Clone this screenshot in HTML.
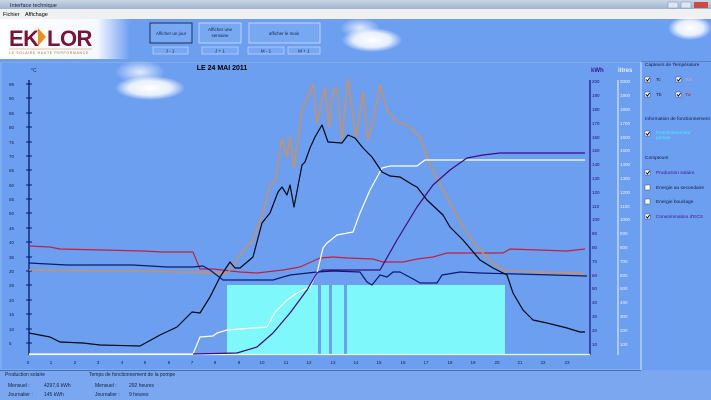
<!DOCTYPE html>
<html><head><meta charset="utf-8"><style>
*{margin:0;padding:0}
body{width:711px;height:400px;overflow:hidden;background:#6d9ff0;font-family:"Liberation Sans",sans-serif;position:relative}
.t{position:absolute;font-size:5px;color:#102040;white-space:nowrap}
</style></head><body>
<svg width="711" height="400" style="position:absolute;left:0;top:0" font-family="Liberation Sans, sans-serif">
<defs>
<linearGradient id="tb" x1="0" y1="0" x2="0" y2="1"><stop offset="0" stop-color="#c9d6e6"/><stop offset="1" stop-color="#9fb4cf"/></linearGradient>
<linearGradient id="lg" x1="0" y1="0" x2="1" y2="0"><stop offset="0" stop-color="#fff"/><stop offset="0.75" stop-color="#f4f8ff"/><stop offset="1" stop-color="#6d9ff0"/></linearGradient>
<radialGradient id="cl"><stop offset="0" stop-color="#fff"/><stop offset="0.6" stop-color="#f4f8ff" stop-opacity="0.9"/><stop offset="1" stop-color="#fff" stop-opacity="0"/></radialGradient>
<radialGradient id="glow"><stop offset="0" stop-color="#fff" stop-opacity="0.8"/><stop offset="1" stop-color="#fff" stop-opacity="0"/></radialGradient>
</defs>
<!-- title bar -->
<rect x="0" y="0" width="711" height="9" fill="url(#tb)"/>
<text x="10" y="7" font-size="5.5" fill="#102040">Interface technique</text>
<rect x="668" y="2" width="10" height="6" fill="#dde6f2" stroke="#7890b0" stroke-width="0.5"/>
<rect x="681" y="2" width="10" height="6" fill="#dde6f2" stroke="#7890b0" stroke-width="0.5"/>
<rect x="694" y="2" width="14" height="6" fill="#d04a40"/>
<rect x="0" y="9" width="711" height="10" fill="#f0f0f0"/>
<text x="3" y="16" font-size="5.5" fill="#000">Fichier</text>
<text x="25" y="16" font-size="5.5" fill="#000">Affichage</text>
<!-- header -->
<rect x="0" y="19" width="711" height="42" fill="#6d9ff0"/>
<rect x="0" y="19" width="130" height="40" fill="url(#lg)"/>
<text x="9" y="46" font-size="22" font-weight="bold" fill="#7a1535" letter-spacing="-0.5">EK</text>
<polygon points="38,28 46,37 38,46" fill="#e8901a"/>
<text x="47" y="46" font-size="22" font-weight="bold" fill="#7a1535" letter-spacing="-0.5">LOR</text>
<line x1="9" y1="49" x2="92" y2="49" stroke="#c89050" stroke-width="0.5"/>
<text x="9" y="54" font-size="3.6" fill="#b07030" letter-spacing="0.6">LE SOLAIRE HAUTE PERFORMANCE</text>
<ellipse cx="372" cy="40" rx="30" ry="12" fill="url(#cl)"/>
<ellipse cx="360" cy="28" rx="20" ry="10" fill="url(#glow)"/>
<ellipse cx="690" cy="28" rx="22" ry="12" fill="url(#cl)"/>
<!-- buttons -->
<g font-size="4.5" fill="#102040" text-anchor="middle">
<rect x="150" y="23" width="42" height="20" fill="#79a8f2" stroke="#203050" stroke-width="1"/>
<text x="171" y="35">Afficher un jour</text>
<rect x="199" y="23" width="42" height="20" fill="#79a8f2" stroke="#d0e0ff" stroke-width="0.8"/>
<text x="220" y="31">Afficher une</text><text x="220" y="37">semaine</text>
<rect x="249" y="23" width="71" height="20" fill="#79a8f2" stroke="#d0e0ff" stroke-width="0.8"/>
<text x="284" y="35">afficher le mois</text>
<rect x="153" y="47" width="35" height="7" fill="#79a8f2" stroke="#d0e0ff" stroke-width="0.6"/><text x="170" y="52.5">J - 1</text>
<rect x="202" y="47" width="36" height="7" fill="#79a8f2" stroke="#d0e0ff" stroke-width="0.6"/><text x="220" y="52.5">J + 1</text>
<rect x="248" y="47" width="36" height="7" fill="#79a8f2" stroke="#d0e0ff" stroke-width="0.6"/><text x="266" y="52.5">M - 1</text>
<rect x="288" y="47" width="32" height="7" fill="#79a8f2" stroke="#d0e0ff" stroke-width="0.6"/><text x="304" y="52.5">M + 1</text>
</g>
<!-- chart panel -->
<rect x="0" y="61" width="711" height="1" fill="#5c80c0"/>
<rect x="1" y="62" width="640" height="308" fill="#6d9ff0" stroke="#90b8f4" stroke-width="1"/>
<line x1="641" y1="62" x2="641" y2="370" stroke="#d8e6ff" stroke-width="1"/>
<ellipse cx="150" cy="88" rx="35" ry="12" fill="url(#cl)"/>
<ellipse cx="140" cy="72" rx="25" ry="12" fill="url(#glow)"/>
<text x="222" y="70" font-size="7" font-weight="bold" fill="#000" text-anchor="middle">LE 24 MAI 2011</text>
<text x="31" y="72" font-size="5" fill="#102040">°C</text>
<!-- cyan pump -->
<rect x="227" y="285" width="278" height="69" fill="#7ff8fb"/>
<rect x="318" y="285" width="3" height="69" fill="#6d9ff0"/>
<rect x="329" y="285" width="3" height="69" fill="#6d9ff0"/>
<rect x="344" y="285" width="3" height="69" fill="#6d9ff0"/>
<!-- left axis -->
<line x1="29" y1="80" x2="29" y2="355" stroke="#001a6a" stroke-width="1.3"/>
<g stroke="#001a6a" stroke-width="1">
<line x1="26" y1="84" x2="32" y2="84"/><line x1="26" y1="98" x2="32" y2="98"/><line x1="26" y1="113" x2="32" y2="113"/><line x1="26" y1="127" x2="32" y2="127"/><line x1="26" y1="142" x2="32" y2="142"/><line x1="26" y1="156" x2="32" y2="156"/><line x1="26" y1="170" x2="32" y2="170"/><line x1="26" y1="185" x2="32" y2="185"/><line x1="26" y1="199" x2="32" y2="199"/><line x1="26" y1="213" x2="32" y2="213"/><line x1="26" y1="228" x2="32" y2="228"/><line x1="26" y1="242" x2="32" y2="242"/><line x1="26" y1="257" x2="32" y2="257"/><line x1="26" y1="271" x2="32" y2="271"/><line x1="26" y1="285" x2="32" y2="285"/><line x1="26" y1="300" x2="32" y2="300"/><line x1="26" y1="314" x2="32" y2="314"/><line x1="26" y1="329" x2="32" y2="329"/><line x1="26" y1="343" x2="32" y2="343"/>
</g>
<g font-size="4.5" fill="#102040">
<text x="9" y="86">95</text><text x="9" y="100">90</text><text x="9" y="115">85</text><text x="9" y="129">80</text><text x="9" y="144">75</text><text x="9" y="158">70</text><text x="9" y="172">65</text><text x="9" y="187">60</text><text x="9" y="201">55</text><text x="9" y="215">50</text><text x="9" y="230">45</text><text x="9" y="244">40</text><text x="9" y="259">35</text><text x="9" y="273">30</text><text x="9" y="287">25</text><text x="9" y="302">20</text><text x="9" y="316">15</text><text x="9" y="331">10</text><text x="9" y="345">5</text>
</g>
<!-- right axes -->
<line x1="590" y1="80" x2="590" y2="355" stroke="#1a1080" stroke-width="1.2"/>
<line x1="618" y1="80" x2="618" y2="355" stroke="#f0f6ff" stroke-width="1"/>
<text x="591" y="72" font-size="6" font-weight="bold" fill="#401090">kWh</text>
<text x="618" y="72" font-size="6" font-weight="bold" fill="#e8f0ff">litres</text>
<g font-size="4.5">
<g fill="#201060">
<text x="592" y="83">200</text><text x="592" y="97">190</text><text x="592" y="111">180</text><text x="592" y="125">170</text><text x="592" y="139">160</text><text x="592" y="152">150</text><text x="592" y="166">140</text><text x="592" y="180">130</text><text x="592" y="194">120</text><text x="592" y="208">110</text><text x="592" y="221">100</text><text x="592" y="235">90</text><text x="592" y="249">80</text><text x="592" y="263">70</text><text x="592" y="277">60</text><text x="592" y="290">50</text><text x="592" y="304">40</text><text x="592" y="318">30</text><text x="592" y="332">20</text><text x="592" y="346">10</text>
</g>
<g fill="#e8f0ff">
<text x="620" y="83">2000</text><text x="620" y="97">1900</text><text x="620" y="111">1800</text><text x="620" y="125">1700</text><text x="620" y="139">1600</text><text x="620" y="152">1500</text><text x="620" y="166">1400</text><text x="620" y="180">1300</text><text x="620" y="194">1200</text><text x="620" y="208">1100</text><text x="620" y="221">1000</text><text x="620" y="235">900</text><text x="620" y="249">800</text><text x="620" y="263">700</text><text x="620" y="277">600</text><text x="620" y="290">500</text><text x="620" y="304">400</text><text x="620" y="318">300</text><text x="620" y="332">200</text><text x="620" y="346">100</text>
</g></g>
<!-- x axis -->
<line x1="29" y1="354.5" x2="590" y2="354.5" stroke="#f0f6ff" stroke-width="1.2"/>
<g font-size="4.5" fill="#102040" text-anchor="middle">
<text x="28" y="364">0</text><text x="51" y="364">1</text><text x="75" y="364">2</text><text x="98" y="364">3</text><text x="122" y="364">4</text><text x="145" y="364">5</text><text x="169" y="364">6</text><text x="192" y="364">7</text><text x="215" y="364">8</text><text x="239" y="364">9</text><text x="262" y="364">10</text><text x="286" y="364">11</text><text x="309" y="364">12</text><text x="333" y="364">13</text><text x="356" y="364">14</text><text x="379" y="364">15</text><text x="403" y="364">16</text><text x="426" y="364">17</text><text x="450" y="364">18</text><text x="473" y="364">19</text><text x="497" y="364">20</text><text x="520" y="364">21</text><text x="543" y="364">22</text><text x="567" y="364">23</text>
</g>
<!-- curves -->
<g fill="none" stroke-width="1.2" stroke-linejoin="round">
<polyline stroke="#c02040" points="29,246 50,247 60,249 143,251 163,252 193,252 200,269 213,269 240,272 257,273 283,270 300,267 320,258 333,257 347,258 373,259 383,262 403,262 417,259 433,257 447,253 503,253 510,249 567,251 585,249"/>
<polyline stroke="#d0905a" stroke-width="1.4" points="29,270 193,272 227,273 230,270 240,255 253,240 263,213 270,185 275,182 282,138 287,157 290,137 294,168 302,110 313,84 317,123 325,88 329,127 333,90 337,88 342,140 348,79 356,138 363,92 368,140 373,122 380,85 387,110 397,122 407,125 420,137 430,165 437,178 450,203 463,227 477,247 493,263 505,271 533,272 580,273 585,276"/>
<polyline stroke="#0a1a70" points="29,263 67,265 133,265 167,267 193,267 203,266 210,270 223,280 273,280 283,277 290,275 317,272 333,271 360,272 367,282 372,285 380,275 387,277 393,272 400,272 415,280 420,283 437,283 442,275 460,272 480,273 587,276"/>
<polyline stroke="#ffffff" points="29,354 193,354 200,337 213,336 217,333 227,330 267,327 275,312 287,300 297,293 310,287 317,273 323,248 327,243 337,235 353,232 360,213 370,190 382,168 390,166 417,166 425,160 585,160"/>
<polyline stroke="#400a80" points="193,354 237,353 257,347 273,333 290,313 307,290 317,273 323,270 380,270 397,240 417,207 433,185 450,170 467,158 483,155 500,153 585,153"/>
<polyline stroke="#000814" points="29,333 50,337 60,342 83,343 100,345 140,346 160,335 177,327 192,312 200,313 210,297 220,277 230,262 235,268 240,268 253,257 262,223 270,213 278,192 282,187 287,195 290,185 294,207 302,165 305,162 310,148 315,137 322,125 328,142 342,143 348,135 355,138 363,148 372,157 382,172 390,176 400,177 413,185 417,187 427,200 443,215 450,227 463,240 480,260 493,268 507,275 513,293 523,310 533,320 547,323 567,328 580,332 585,332"/>
</g>
<!-- bottom area -->
<rect x="0" y="370" width="711" height="30" fill="#7aa7ef"/>
<line x1="0" y1="370.5" x2="641" y2="370.5" stroke="#4a70b0" stroke-width="1"/>
<g font-size="5" fill="#102040">
<text x="5" y="376">Production solaire</text>
<text x="89" y="376">Temps de fonctionnement de la pompe</text>
<text x="8" y="387">Mensuel :</text><text x="44" y="387">4297,6 kWh</text>
<text x="95" y="387">Mensuel :</text><text x="129" y="387">292 heures</text>
<text x="8" y="396">Journalier :</text><text x="44" y="396">145 kWh</text>
<text x="95" y="396">Journalier :</text><text x="129" y="396">9 heures</text>
</g>
<!-- right panel -->
<g font-size="4.8" fill="#0a1a40">
<text x="645" y="66">Capteurs de Température</text>
<text x="645" y="120">Information de fonctionnement</text>
<text x="645" y="159">Compteurs</text>
<text x="656" y="81">Tc</text><text x="685" y="81" fill="#e0a0c0">Tcs</text>
<text x="656" y="96">Tb</text><text x="685" y="96" fill="#c02040">Tw</text>
<text x="656" y="134" fill="#40f0ff">Fonctionnement</text><text x="656" y="139" fill="#40f0ff">pompe</text>
<text x="656" y="174" fill="#401090">Production solaire</text>
<text x="656" y="189">Energie au secondaire</text>
<text x="656" y="203">Energie bouclage</text>
<text x="656" y="218" fill="#401090">Consommation d'ECS</text>
</g>
<g fill="#fff" stroke="#203050" stroke-width="0.4">
<rect x="645" y="77" width="5" height="5"/><rect x="676" y="77" width="5" height="5"/>
<rect x="645" y="92" width="5" height="5"/><rect x="676" y="92" width="5" height="5"/>
<rect x="645" y="131" width="5" height="5"/>
<rect x="645" y="170" width="5" height="5"/><rect x="645" y="185" width="5" height="5"/>
<rect x="645" y="199" width="5" height="5"/><rect x="645" y="214" width="5" height="5"/>
</g>
<g fill="none" stroke="#000" stroke-width="0.9">
<polyline points="646,79.5 647.5,81 649.5,78"/><polyline points="677,79.5 678.5,81 680.5,78"/>
<polyline points="646,94.5 647.5,96 649.5,93"/><polyline points="677,94.5 678.5,96 680.5,93"/>
<polyline points="646,133.5 647.5,135 649.5,132"/>
<polyline points="646,172.5 647.5,174 649.5,171"/>
<polyline points="646,216.5 647.5,218 649.5,215"/>
</g>
</svg>
</body></html>
